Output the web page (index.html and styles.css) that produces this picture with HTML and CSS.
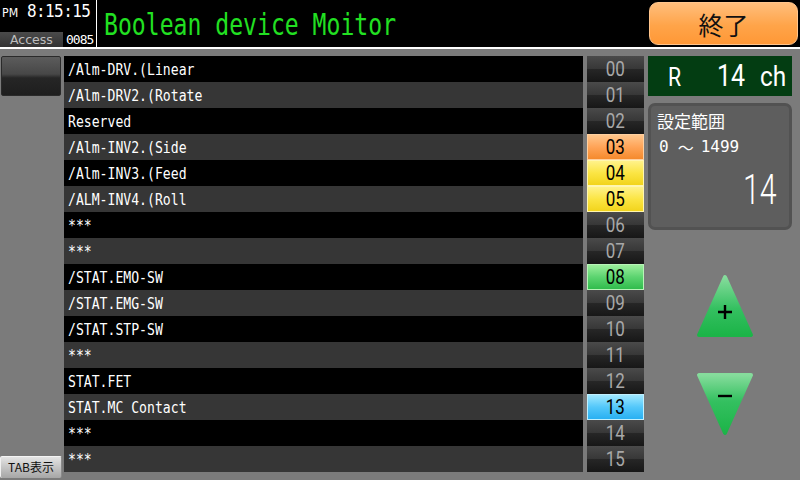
FILE: index.html
```html
<!DOCTYPE html>
<html lang="ja">
<head>
<meta charset="utf-8">
<title>Boolean device Moitor</title>
<link rel="stylesheet" href="styles.css">
</head>
<body>
<div class="screen">
  <header class="top">
    <div class="clock">
      <div class="time"><span class="ampm">PM</span><span class="hms">8:15:15</span></div>
      <div class="access"><span class="acc">Access</span><span class="code">0085</span></div>
    </div>
    <div class="title"><span class="title-text">Boolean device Moitor</span></div>
    <button class="end">終了</button>
  </header>
  <main class="main">
    <aside class="side">
      <div class="side-btn"></div>
      <div class="tab-btn">TAB表示</div>
    </aside>
    <ul class="labels">
      <li><span class="t">/Alm-DRV.(Linear</span></li>
      <li><span class="t">/Alm-DRV2.(Rotate</span></li>
      <li><span class="t">Reserved</span></li>
      <li><span class="t">/Alm-INV2.(Side</span></li>
      <li><span class="t">/Alm-INV3.(Feed</span></li>
      <li><span class="t">/ALM-INV4.(Roll</span></li>
      <li><span class="t">***</span></li>
      <li><span class="t">***</span></li>
      <li><span class="t">/STAT.EMO-SW</span></li>
      <li><span class="t">/STAT.EMG-SW</span></li>
      <li><span class="t">/STAT.STP-SW</span></li>
      <li><span class="t">***</span></li>
      <li><span class="t">STAT.FET</span></li>
      <li><span class="t">STAT.MC Contact</span></li>
      <li><span class="t">***</span></li>
      <li><span class="t">***</span></li>
    </ul>
    <ul class="nums">
      <li><span class="n">00</span></li>
      <li><span class="n">01</span></li>
      <li><span class="n">02</span></li>
      <li class="orange"><span class="n">03</span></li>
      <li class="yellow"><span class="n">04</span></li>
      <li class="yellow"><span class="n">05</span></li>
      <li><span class="n">06</span></li>
      <li><span class="n">07</span></li>
      <li class="green"><span class="n">08</span></li>
      <li><span class="n">09</span></li>
      <li><span class="n">10</span></li>
      <li><span class="n">11</span></li>
      <li><span class="n">12</span></li>
      <li class="cyan"><span class="n">13</span></li>
      <li><span class="n">14</span></li>
      <li><span class="n">15</span></li>
    </ul>
    <section class="panel">
      <div class="rch"><span class="r">R</span><span class="ch-num">14</span><span class="ch-unit">ch</span></div>
      <div class="setting">
        <div class="set-title">設定範囲</div>
        <div class="range"><span>0</span><span class="tilde">～</span><span>1499</span></div>
        <div class="value"><span class="value-num">14</span></div>
      </div>
      <svg class="arrow up" width="58" height="66" viewBox="0 0 58 66">
        <defs>
          <linearGradient id="gu" x1="0" y1="0" x2="0" y2="1">
            <stop offset="0" stop-color="#86dc9c"/>
            <stop offset="0.55" stop-color="#34c060"/>
            <stop offset="1" stop-color="#1cb448"/>
          </linearGradient>
        </defs>
        <polygon points="29,4 55,62 3,62" fill="url(#gu)" stroke="url(#gu)" stroke-width="4" stroke-linejoin="round"/>
        <path d="M22 39 H36 M29 32 V46" stroke="#000" stroke-width="2.4" fill="none"/>
      </svg>
      <svg class="arrow down" width="58" height="66" viewBox="0 0 58 66">
        <defs>
          <linearGradient id="gd" x1="0" y1="0" x2="0" y2="1">
            <stop offset="0" stop-color="#86dc9c"/>
            <stop offset="0.45" stop-color="#34c060"/>
            <stop offset="1" stop-color="#1cb448"/>
          </linearGradient>
        </defs>
        <polygon points="3,4 55,4 29,62" fill="url(#gd)" stroke="url(#gd)" stroke-width="4" stroke-linejoin="round"/>
        <path d="M22 25 H36" stroke="#000" stroke-width="2.4" fill="none"/>
      </svg>
    </section>
  </main>
</div>
</body>
</html>
```
FILE: styles.css
```css
* { box-sizing: border-box; margin: 0; padding: 0; }
html, body { width: 800px; height: 480px; overflow: hidden; }
body { background: #7b7b7b; font-family: "DejaVu Sans Mono", monospace; color: #fff; }
.screen { width: 800px; height: 480px; display: flex; flex-direction: column; }

.top { height: 49px; background: #000; border-bottom: 2px solid #fff; display: flex; }
.clock { width: 97px; border-right: 1px solid #fff; display: flex; flex-direction: column; justify-content: space-between; }
.time { display: flex; align-items: baseline; height: 20px; padding-top: 4px; }
.ampm { font-family: "DejaVu Sans", sans-serif; font-size: 11px; line-height: 14px; margin-left: 2px; width: 25px; transform: scaleY(1.1); }
.hms { display: inline-block; font-size: 16px; line-height: 16px; letter-spacing: -0.6px; transform: scaleY(1.05); }
.access { display: flex; align-items: stretch; height: 15px; }
.acc { width: 63px; background: linear-gradient(#4a4a4a, #333); color: #bdbdbd; font-family: "DejaVu Sans", sans-serif; font-size: 12.5px; line-height: 15px; padding-left: 10px; }
.code { font-size: 13px; line-height: 15px; letter-spacing: -1px; margin-left: 3px; }

.title { flex: 1; padding-left: 7px; padding-top: 10px; }
.title-text { display: inline-block; font-size: 30px; line-height: 30px; color: #22e022; transform: scaleX(0.77); transform-origin: 0 50%; white-space: nowrap; }

.end { width: 149px; height: 43px; margin: 2px 2px 0 0; border: 1px solid #ffc58c; border-radius: 9px; background: linear-gradient(#ffbe7c, #ffa449 55%, #ff9836); font-family: "Noto Sans CJK JP", sans-serif; font-size: 25px; color: #111; line-height: 40px; text-align: center; }

.main { flex: 1; display: flex; padding-top: 7px; }
.side { width: 64px; display: flex; flex-direction: column; justify-content: space-between; padding-bottom: 2px; }
.side-btn { width: 60px; height: 40px; margin-left: 1px; border: 1px solid #2a2a2a; border-radius: 2px; background: linear-gradient(#5c5c5c, #474747 45%, #262626 55%, #1e1e1e); }
.tab-btn { width: 62px; height: 22px; border-radius: 2px; background: linear-gradient(#e4e4e4, #c4c4c4 50%, #a6a6a6); border-top: 1px solid #f4f4f4; border-left: 1px solid #f0f0f0; border-right: 1px solid #8a8a8a; color: #111; font-family: "Noto Sans CJK JP", sans-serif; font-size: 12px; line-height: 20px; text-align: center; }

.labels { list-style: none; width: 519px; }
.labels li { height: 26px; padding: 2px 0 0 4px; line-height: 24px; background: #000; white-space: pre; }
.labels li:nth-child(even) { background: #363636; }
.t { display: inline-block; font-size: 15px; transform: scaleX(0.875); transform-origin: 0 50%; }

.nums { list-style: none; width: 57px; margin-left: 4px; }
.nums li { height: 26px; display: flex; justify-content: center; background: linear-gradient(#4a4a4a, #383838 48%, #262626 52%, #171717); color: #a8a8a8; font-family: Roboto, sans-serif; font-size: 20px; line-height: 26px; }
.n { display: inline-block; transform: scaleX(0.85); }
.nums li.orange { background: linear-gradient(#ffc68c, #ffa458 50%, #f58a2c); color: #000; border: 1px solid #ffd0a0; line-height: 24px; }
.nums li.yellow { background: linear-gradient(#fff28a, #fbe544 50%, #f2d41c); color: #000; border: 1px solid #fff6b0; line-height: 24px; }
.nums li.green { background: linear-gradient(#9cee9c, #5cd470 50%, #30bc4c); color: #000; border: 1px solid #b8f4b8; line-height: 24px; }
.nums li.cyan { background: linear-gradient(#a0e8ff, #54c8fa 50%, #28b0f2); color: #000; border: 1px solid #c0f0ff; line-height: 24px; }

.panel { width: 144px; margin-left: 4px; display: flex; flex-direction: column; }
.rch { height: 40px; background: #033d12; font-family: Roboto, sans-serif; font-size: 32px; line-height: 38px; padding-left: 20px; white-space: nowrap; }
.r { display: inline-block; width: 14px; font-size: 25px; transform: scaleX(0.85); transform-origin: 0 50%; }
.ch-num { display: inline-block; width: 28px; margin-left: 35px; transform: scaleX(0.78); transform-origin: 0 50%; }
.ch-unit { display: inline-block; width: 26px; margin-left: 15px; font-size: 28px; transform: scaleX(0.87); transform-origin: 0 50%; }

.setting { height: 127px; margin-top: 7px; border: 3px solid #525252; border-radius: 7px; background: #5e5e5e; padding: 5px 12px 0 6px; }
.set-title { font-family: "Noto Sans CJK JP", sans-serif; font-size: 17px; line-height: 20px; }
.range { display: flex; font-size: 16px; line-height: 20px; margin-top: 6px; padding-left: 2px; }
.tilde { font-family: "Noto Sans CJK JP", sans-serif; margin: 0 7px 0 9px; }
.value { text-align: right; margin-top: 12px; font-family: Roboto, sans-serif; font-weight: 300; font-size: 42px; line-height: 42px; }
.value-num { display: inline-block; transform: scaleX(0.72); transform-origin: 100% 50%; }

.arrow { display: block; margin-left: 48px; }
.arrow.up { margin-top: 43px; }
.arrow.down { margin-top: 32px; }
```
